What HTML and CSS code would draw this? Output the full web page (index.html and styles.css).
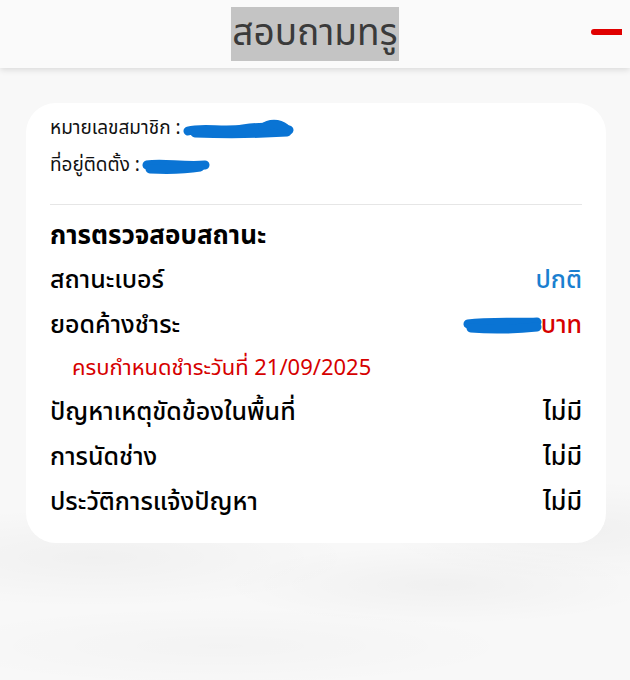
FILE: index.html
```html
<!DOCTYPE html>
<html lang="th">
<head>
    <meta charset="UTF-8">
    <meta name="viewport" content="width=device-width, initial-scale=1.0">
    <title>สอบถามทรู</title>
    <link rel="stylesheet" href="styles.css">
</head>
<body>
    <header class="topbar">
        <h1 class="topbar-title">สอบถามทรู</h1>
        <span class="topbar-dash"></span>
    </header>

    <main class="page">
        <section class="card">
            <div class="info">
                <p class="info-line">หมายเลขสมาชิก :
                    <svg class="redact redact-long" viewBox="0 0 112 20">
                        <path d="M5 12 C20 8, 40 13, 60 10 S90 8, 106 11" />
                        <path d="M12 14 C40 15, 72 15, 104 13" />
                        <path d="M80 9 C86 4, 96 4, 102 9" />
                    </svg>
                </p>
                <p class="info-line">ที่อยู่ติดตั้ง :
                    <svg class="redact redact-short" viewBox="0 0 68 18">
                        <path d="M5 8 C20 5, 40 10, 63 8" />
                        <path d="M8 12 C28 13, 46 12, 58 10" />
                    </svg>
                </p>
            </div>

            <h2 class="status-title">การตรวจสอบสถานะ</h2>

            <div class="row">
                <span>สถานะเบอร์</span>
                <span class="val-blue">ปกติ</span>
            </div>
            <div class="row">
                <span>ยอดค้างชำระ</span>
                <span class="val-red">
                    <svg class="redact redact-amount" viewBox="0 0 80 18">
                        <path d="M5 7 C26 4, 52 6, 74 5" />
                        <path d="M8 11 C30 13, 54 12, 74 10" />
                    </svg>บาท</span>
            </div>
            <p class="due">ครบกำหนดชำระวันที่ 21/09/2025</p>
            <div class="row">
                <span>ปัญหาเหตุขัดข้องในพื้นที่</span>
                <span>ไม่มี</span>
            </div>
            <div class="row">
                <span>การนัดช่าง</span>
                <span>ไม่มี</span>
            </div>
            <div class="row">
                <span>ประวัติการแจ้งปัญหา</span>
                <span>ไม่มี</span>
            </div>
        </section>
    </main>
</body>
</html>
```

FILE: styles.css
```css
* {
    margin: 0;
    padding: 0;
    box-sizing: border-box;
}

body {
    font-family: 'Noto Sans Thai', 'Noto Sans', sans-serif;
    color: #000;
    min-height: 100vh;
    background:
        radial-gradient(ellipse 260px 50px at 15% 82%, rgba(0, 0, 0, 0.03), transparent),
        radial-gradient(ellipse 220px 40px at 70% 86%, rgba(0, 0, 0, 0.03), transparent),
        radial-gradient(ellipse 200px 50px at 92% 78%, rgba(0, 0, 0, 0.03), transparent),
        radial-gradient(ellipse 300px 40px at 35% 95%, rgba(0, 0, 0, 0.02), transparent),
        #f8f8f8;
}

/* Top bar */
.topbar {
    height: 68px;
    background: #fafafa;
    box-shadow: 0 2px 6px rgba(0, 0, 0, 0.12);
    display: flex;
    justify-content: center;
    align-items: center;
    position: relative;
}

.topbar-title {
    font-size: 37px;
    font-weight: normal;
    color: #3a3a3a;
    background: #c4c4c4;
    line-height: 54px;
    padding: 0 1px;
    margin-top: -1px;
}

.topbar-dash {
    position: absolute;
    right: 8px;
    top: 29px;
    width: 31px;
    height: 6px;
    background: #e00000;
    border-radius: 3px 0 0 3px;
}

/* Card */
.page {
    padding: 35px 24px 0 26px;
}

.card {
    background: #fff;
    border-radius: 30px;
    padding: 7px 24px 18px 24px;
}

.info {
    border-bottom: 1px solid #e6e6e6;
    padding-bottom: 20px;
}

.info-line {
    font-size: 19px;
    line-height: 37px;
    color: #111;
    display: flex;
    align-items: center;
    gap: 2px;
}

.redact {
    fill: none;
    stroke: #0a74d4;
    stroke-width: 9;
    stroke-linecap: round;
}

.redact-long {
    width: 112px;
    height: 20px;
}

.redact-short {
    width: 68px;
    height: 18px;
}

.redact-amount {
    width: 80px;
    height: 18px;
    margin-right: -2px;
}

.status-title {
    font-size: 26px;
    font-weight: bold;
    line-height: 34px;
    margin-top: 14px;
    margin-bottom: 5px;
}

.row {
    display: flex;
    justify-content: space-between;
    align-items: center;
    font-size: 25px;
    font-weight: 500;
    line-height: 45px;
}

.val-blue {
    color: #1a7fd0;
}

.val-red {
    color: #d60000;
    display: flex;
    align-items: center;
}

.due {
    color: #d60000;
    font-size: 22px;
    line-height: 42px;
    padding-left: 22px;
}
```
